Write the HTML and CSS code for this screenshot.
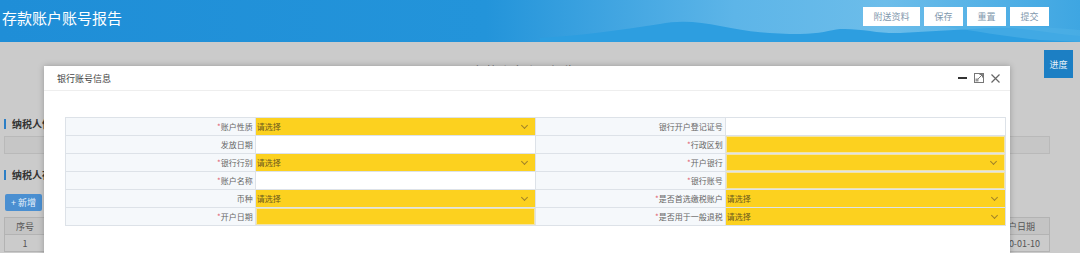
FILE: index.html
```html
<!DOCTYPE html>
<html lang="zh-CN">
<head>
    <meta charset="UTF-8">
    <title>存款账户账号报告</title>
    <link rel="stylesheet" href="styles.css">
</head>
<body>
    <header class="topbar">
        <svg class="hills" viewBox="0 0 540 42" preserveAspectRatio="none">
            <path d="M0 42 L0 38 C40 36 80 30 120 24 C140 20 160 22 180 26 C210 32 230 34 260 34 C280 34 290 30 300 29 C320 28 340 34 360 33 C390 31 420 30 450 28 C480 26 510 34 540 36 L540 42 Z" fill="#2d9ee0"/>
            <path d="M400 26 C430 30 460 36 500 40 L540 42 L540 30 C500 26 450 24 400 26 Z" fill="#4fb0e6" opacity="0.6"/>
        </svg>
        <h1 class="app-title">存款账户账号报告</h1>
        <div class="actions">
            <button class="top-btn wide">附送资料</button>
            <button class="top-btn">保存</button>
            <button class="top-btn">重置</button>
            <button class="top-btn">提交</button>
        </div>
    </header>

    <main class="page">
        <div class="page-head">
            <div class="doc-title">存款账户账号报告</div>
            <button class="progress-btn">进度</button>
        </div>

        <section class="section">
            <h2 class="sec-title">纳税人信息</h2>
            <div class="info-box"></div>
        </section>

        <section class="section">
            <h2 class="sec-title">纳税人存款账户账号信息</h2>
            <button class="add-btn">+ 新增</button>
            <table class="list">
                <tr><th class="c-no">序号</th><th>账户性质</th><th>银行行别</th><th>开户银行</th><th>银行账号</th><th class="c-date">开户日期</th></tr>
                <tr><td>1</td><td></td><td></td><td></td><td></td><td>2020-01-10</td></tr>
            </table>
        </section>
    </main>

    <div class="modal">
        <div class="modal-head">
            <span class="modal-title">银行账号信息</span>
            <div class="modal-tools">
                <span class="tool-min"></span>
                <svg class="tool-max" width="10" height="10" viewBox="0 0 10 10">
                    <rect x="0.5" y="0.5" width="9" height="9" fill="none" stroke="#777" stroke-width="1"/>
                    <path d="M4 6 L8.5 1.5 M5.5 1.5 H8.5 V4.5" fill="none" stroke="#777" stroke-width="1"/>
                    <rect x="1.5" y="5.5" width="3" height="3" fill="#999"/>
                </svg>
                <svg class="tool-close" width="9" height="9" viewBox="0 0 9 9">
                    <path d="M0.5 0.5 L8.5 8.5 M8.5 0.5 L0.5 8.5" stroke="#666" stroke-width="1.2"/>
                </svg>
            </div>
        </div>
        <div class="modal-body">
            <table class="form">
                <tr>
                    <td class="lbl"><i>*</i>账户性质</td>
                    <td class="val req"><div class="select">请选择<span class="chev"></span></div></td>
                    <td class="lbl">银行开户登记证号</td>
                    <td class="val"></td>
                </tr>
                <tr>
                    <td class="lbl">发放日期</td>
                    <td class="val"></td>
                    <td class="lbl"><i>*</i>行政区划</td>
                    <td class="val req"><div class="input"></div></td>
                </tr>
                <tr>
                    <td class="lbl"><i>*</i>银行行别</td>
                    <td class="val req"><div class="select">请选择<span class="chev"></span></div></td>
                    <td class="lbl"><i>*</i>开户银行</td>
                    <td class="val req"><div class="select boxed"><span class="chev"></span></div></td>
                </tr>
                <tr>
                    <td class="lbl"><i>*</i>账户名称</td>
                    <td class="val"></td>
                    <td class="lbl"><i>*</i>银行账号</td>
                    <td class="val req"><div class="input"></div></td>
                </tr>
                <tr>
                    <td class="lbl">币种</td>
                    <td class="val req"><div class="select">请选择<span class="chev"></span></div></td>
                    <td class="lbl"><i>*</i>是否首选缴税账户</td>
                    <td class="val req"><div class="select">请选择<span class="chev"></span></div></td>
                </tr>
                <tr>
                    <td class="lbl"><i>*</i>开户日期</td>
                    <td class="val req"><div class="input"></div></td>
                    <td class="lbl"><i>*</i>是否用于一般退税</td>
                    <td class="val req"><div class="select">请选择<span class="chev"></span></div></td>
                </tr>
            </table>
        </div>
    </div>
</body>
</html>
```

FILE: styles.css
```css
body {
    margin: 0;
    font-family: "Noto Sans CJK SC", "Noto Sans", sans-serif;
    background: #cbcbcb;
    height: 253px;
    overflow: hidden;
    position: relative;
}

button {
    font-family: inherit;
    cursor: pointer;
}

/* top bar */
.topbar {
    position: relative;
    height: 42px;
    display: flex;
    align-items: flex-start;
    justify-content: space-between;
    background: linear-gradient(90deg, #1f8ed7 0%, #2394da 45%, #5db5e8 68%, #6cbdea 82%, #3ea6e2 100%);
    overflow: hidden;
}

.hills {
    position: absolute;
    left: 540px;
    bottom: 0;
    width: 540px;
    height: 42px;
}

.app-title {
    position: relative;
    margin: 8px 0 0 2px;
    font-size: 15px;
    font-weight: 400;
    line-height: 20px;
    color: #fff;
}

.actions {
    position: relative;
    display: flex;
    gap: 4px;
    margin: 7px 31px 0 0;
}

.top-btn {
    width: 39px;
    height: 19px;
    padding: 0;
    border: none;
    background: #fff;
    color: #7f98ad;
    font-size: 9px;
}

.top-btn.wide {
    width: 57px;
}

/* page behind the dialog */
.page {
    padding: 8px 7px 0 4px;
}

.page-head {
    display: flex;
    justify-content: space-between;
    align-items: flex-start;
}

.doc-title {
    flex: 1;
    text-align: center;
    margin-top: 11px;
    font-size: 13px;
    color: #777;
}

.progress-btn {
    width: 29px;
    height: 28px;
    padding: 0;
    border: none;
    background: #1c7fc4;
    color: #e6f0f8;
    font-size: 9px;
}

.section {
    margin-top: 39px;
}

.section + .section {
    margin-top: 16px;
}

.sec-title {
    margin: 0 0 7px;
    padding-left: 6px;
    border-left: 2px solid #2c7fc6;
    font-size: 10px;
    line-height: 10px;
    font-weight: 700;
    color: #333;
}

.info-box {
    width: 1044px;
    height: 16px;
    border: 1px solid #b9b9b9;
    background: #c6c6c6;
}

.add-btn {
    margin: 0 0 0 1px;
    width: 37px;
    height: 17px;
    padding: 0;
    border: none;
    border-radius: 2px;
    background: #4a8fd1;
    color: #e8f1fa;
    font-size: 9px;
}

.list {
    margin-top: 6px;
    width: 1046px;
    table-layout: fixed;
    border-collapse: collapse;
    font-size: 9px;
    color: #555;
}

.list th,
.list td {
    height: 16px;
    border: 1px solid #b3b3b3;
    text-align: center;
    font-weight: 400;
    padding: 0;
}

.list th {
    background: #c4c4c4;
}

.list td {
    background: #cbcbcb;
}

.list .c-no {
    width: 40px;
}

.list .c-date {
    width: 64px;
}

/* dialog */
.modal {
    position: absolute;
    left: 44px;
    top: 66px;
    width: 966px;
    height: 220px;
    background: #fff;
    box-shadow: 0 0 6px rgba(0, 0, 0, 0.25);
}

.modal-head {
    height: 24px;
    border-bottom: 1px solid #eee;
    display: flex;
    align-items: center;
    justify-content: space-between;
    padding: 0 10px 0 13px;
}

.modal-title {
    font-size: 9px;
    color: #444;
}

.modal-tools {
    display: flex;
    align-items: center;
    gap: 7px;
}

.tool-min {
    display: block;
    width: 9px;
    height: 2px;
    background: #333;
}

.modal-body {
    padding: 26px 4px 0 21px;
}

.form {
    width: 941px;
    border-collapse: collapse;
    font-size: 8px;
    color: #666;
}

.form td {
    height: 17px;
    padding: 0;
    border: 1px solid #dde2e8;
}

.form .lbl {
    width: 188px;
    background: #f5f8fb;
    text-align: right;
    padding-right: 2px;
}

.form .lbl i {
    font-style: normal;
    color: #e06070;
}

.form .val {
    width: 281px;
    background: #fff;
}

.form .val.req {
    background: #fcd11f;
}

.select,
.input {
    height: 17px;
    display: flex;
    align-items: center;
    justify-content: space-between;
    padding-left: 1px;
    color: #6b5a1e;
}

.input {
    height: 15px;
    border: 1px solid #f3e4a6;
}

.select.boxed {
    height: 15px;
    border: 1px solid #f3e4a6;
    justify-content: flex-end;
}

.chev {
    width: 4px;
    height: 4px;
    margin: 0 8px 3px 0;
    border-right: 1px solid #a0822a;
    border-bottom: 1px solid #a0822a;
    transform: rotate(45deg);
}
```
